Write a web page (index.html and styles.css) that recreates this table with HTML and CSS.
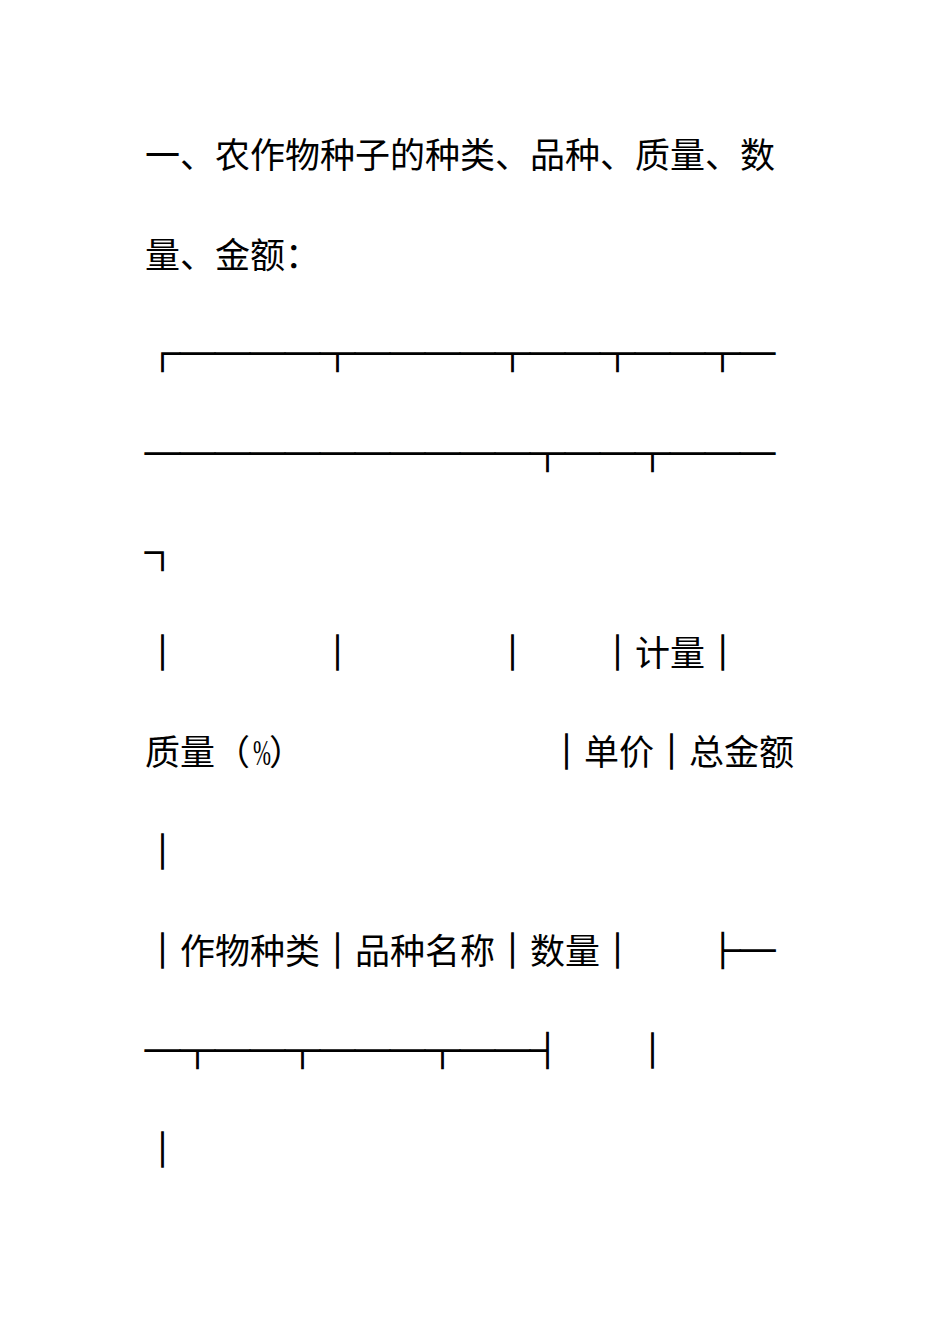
FILE: index.html
```html
<!DOCTYPE html>
<html lang="zh-CN">
<head>
<meta charset="utf-8">
<title>农作物种子</title>
<link rel="stylesheet" href="styles.css">
</head>
<body>
<main class="doc">
  <p class="line">一、农作物种子的种类、品种、质量、数</p>
  <p class="line">量、金额：</p>
  <p class="line box">┌────┬────┬──┬──┬─</p>
  <p class="line box">───────────┬──┬───</p>
  <p class="line box">┐</p>
  <p class="line"><span class="box">│</span>　　　　<span class="box">│</span>　　　　<span class="box">│</span>　　<span class="box">│</span>计量<span class="box">│</span></p>
  <p class="line">质量（<span class="half">%</span>）　　　　　　　<span class="box">│</span>单价<span class="box">│</span>总金额</p>
  <p class="line box">│</p>
  <p class="line"><span class="box">│</span>作物种类<span class="box">│</span>品种名称<span class="box">│</span>数量<span class="box">│</span>　　<span class="box">├─</span></p>
  <p class="line box">─┬──┬───┬──┤　　│</p>
  <p class="line box">│</p>
</main>
</body>
</html>
```
FILE: styles.css
```css
html, body {
  margin: 0;
  padding: 0;
  background: #ffffff;
}

.doc {
  padding: 103px 0 0 145px;
  color: #000000;
  font-family: "Noto Sans CJK SC", "Noto Sans CJK JP", sans-serif;
  font-size: 35px;
  text-spacing-trim: space-all;
  font-kerning: none;
  font-feature-settings: "palt" 0, "halt" 0, "chws" 0;
}

.line {
  margin: 0;
  height: 99.5px;
  line-height: 99.5px;
  white-space: pre;
  font-weight: 400;
}

.box {
  font-family: "Noto Sans CJK SC", sans-serif;
  -webkit-text-stroke: 1.3px #000000;
}

.half {
  display: inline-block;
  width: 15px;
  margin-right: 4px;
  text-align: center;
  font-family: "Liberation Serif", serif;
  font-size: 36px;
  font-weight: 400;
  transform: scaleX(0.6);
}
```
